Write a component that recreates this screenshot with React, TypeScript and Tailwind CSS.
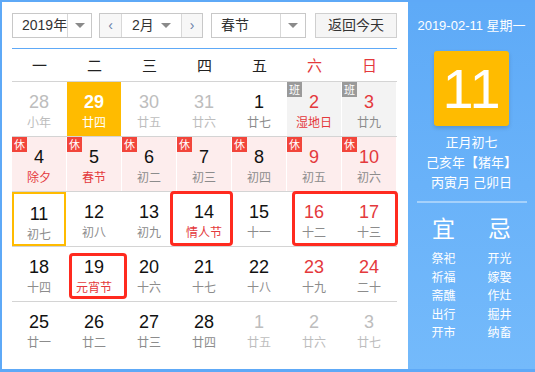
import { ReactNode } from "react";

type Day = {
  n: number;
  lunar: string;
  kind?: "other" | "red" | "hover";
  lunarRed?: boolean;
  badge?: "休" | "班";
  bg?: "pink" | "gray";
  today?: boolean;
};

const rows: Day[][] = [
  [
    { n: 28, lunar: "小年", kind: "other" },
    { n: 29, lunar: "廿四", kind: "hover" },
    { n: 30, lunar: "廿五", kind: "other" },
    { n: 31, lunar: "廿六", kind: "other" },
    { n: 1, lunar: "廿七" },
    { n: 2, lunar: "湿地日", kind: "red", lunarRed: true, badge: "班", bg: "gray" },
    { n: 3, lunar: "廿九", kind: "red", badge: "班", bg: "gray" },
  ],
  [
    { n: 4, lunar: "除夕", lunarRed: true, badge: "休", bg: "pink" },
    { n: 5, lunar: "春节", lunarRed: true, badge: "休", bg: "pink" },
    { n: 6, lunar: "初二", badge: "休", bg: "pink" },
    { n: 7, lunar: "初三", badge: "休", bg: "pink" },
    { n: 8, lunar: "初四", badge: "休", bg: "pink" },
    { n: 9, lunar: "初五", kind: "red", badge: "休", bg: "pink" },
    { n: 10, lunar: "初六", kind: "red", badge: "休", bg: "pink" },
  ],
  [
    { n: 11, lunar: "初七", today: true },
    { n: 12, lunar: "初八" },
    { n: 13, lunar: "初九" },
    { n: 14, lunar: "情人节", lunarRed: true },
    { n: 15, lunar: "十一" },
    { n: 16, lunar: "十二", kind: "red" },
    { n: 17, lunar: "十三", kind: "red" },
  ],
  [
    { n: 18, lunar: "十四" },
    { n: 19, lunar: "元宵节", lunarRed: true },
    { n: 20, lunar: "十六" },
    { n: 21, lunar: "十七" },
    { n: 22, lunar: "十八" },
    { n: 23, lunar: "十九", kind: "red" },
    { n: 24, lunar: "二十", kind: "red" },
  ],
  [
    { n: 25, lunar: "廿一" },
    { n: 26, lunar: "廿二" },
    { n: 27, lunar: "廿三" },
    { n: 28, lunar: "廿四" },
    { n: 1, lunar: "廿五", kind: "other" },
    { n: 2, lunar: "廿六", kind: "other" },
    { n: 3, lunar: "廿七", kind: "other" },
  ],
];

const weekdays = ["一", "二", "三", "四", "五", "六", "日"];

const Caret = () => (
  <span className="w-0 h-0 border-l-[5px] border-r-[5px] border-t-[5px] border-l-transparent border-r-transparent border-t-[#8a8a8a]" />
);

const Select = ({ label, width, children }: { label: string; width: string; children?: ReactNode }) => (
  <div className={`flex h-[25px] border border-[#c8c8c8] bg-white ${width}`}>
    <div className="flex-1 flex items-center pl-[9px] text-[14px] text-[#333] whitespace-nowrap">{label}</div>
    {children}
    <div className="w-[25px] shrink-0 border-l border-[#d8d8d8] flex items-center justify-center">
      <Caret />
    </div>
  </div>
);

const Cell = ({ d }: { d: Day }) => {
  const numColor =
    d.kind === "other"
      ? "text-[#bdbdbd]"
      : d.kind === "red"
      ? "text-[#e4393c]"
      : d.kind === "hover"
      ? "text-white font-bold"
      : "text-[#111]";
  const lunarColor =
    d.kind === "other"
      ? "text-[#bdbdbd]"
      : d.kind === "hover"
      ? "text-white"
      : d.lunarRed
      ? "text-[#e4393c]"
      : "text-[#8c8c8c]";
  const bg =
    d.kind === "hover"
      ? "bg-[#ffbb00]"
      : d.bg === "pink"
      ? "bg-[#fdeded]"
      : d.bg === "gray"
      ? "bg-[#f3f3f3]"
      : "bg-white";
  return (
    <div
      className={`relative h-[54px] flex flex-col items-center pt-[9px] mr-px ${bg} ${
        d.today ? "border-2 border-[#ffbb00] pt-[7px]" : ""
      }`}
    >
      {d.badge && (
        <span
          className={`absolute left-0 top-0 w-[15px] h-[15px] flex items-center justify-center text-[11px] leading-none text-white ${
            d.badge === "休" ? "bg-[#f2453b]" : "bg-[#9a9a9a]"
          }`}
        >
          {d.badge}
        </span>
      )}
      <span className={`text-[18px] leading-[22px] font-['Liberation_Sans',Arial,sans-serif] ${numColor}`}>{d.n}</span>
      <span className={`text-[12px] leading-[18px] ${lunarColor}`}>{d.lunar}</span>
    </div>
  );
};

const yi = ["祭祀", "祈福", "斋醮", "出行", "开市"];
const ji = ["开光", "嫁娶", "作灶", "掘井", "纳畜"];

export default function App() {
  return (
    <div className="w-[535px] h-[372px] flex border-t-2 border-l-2 border-b-[3px] border-[#5ea9f7] bg-white font-['Noto_Sans_CJK_SC','Liberation_Sans',sans-serif]">
      {/* calendar side */}
      <div className="w-[406px] pl-[10px] pr-[11px] pt-[11px]">
        <div className="flex items-center h-[25px] font-['Liberation_Sans','Noto_Sans_CJK_SC',sans-serif]">
          <Select label="2019年" width="w-[80px]" />
          <div className="ml-[7px] flex h-[25px] w-[104px] border border-[#c8c8c8] bg-white text-[14px] text-[#333]">
            <div className="w-[22px] bg-[#f7f7f7] border-r border-[#d8d8d8] flex items-center justify-center text-[#6a7fa8]">‹</div>
            <div className="flex-1 flex items-center pl-[10px]">2月</div>
            <div className="w-[20px] flex items-center justify-start">
              <Caret />
            </div>
            <div className="w-[21px] bg-[#f7f7f7] border-l border-[#d8d8d8] flex items-center justify-center text-[#6a7fa8]">›</div>
          </div>
          <div className="ml-[8px]">
            <Select label="春节" width="w-[95px]" />
          </div>
          <div className="ml-[9px] w-[82px] h-[25px] border border-[#cfcfcf] bg-[#f5f5f5] flex items-center justify-center text-[14px] text-[#333]">
            返回今天
          </div>
        </div>
        <div className="mt-[10px] h-px bg-[#5ea9f7]" />

        <div className="grid grid-cols-7 h-[33px] items-center border-b border-[#d4d4d4] text-[15px]">
          {weekdays.map((w, i) => (
            <div key={w} className={`text-center ${i >= 5 ? "text-[#e4393c]" : "text-[#222]"}`}>
              {w}
            </div>
          ))}
        </div>

        <div className="relative">
          {rows.map((r, i) => (
            <div key={i} className={`grid grid-cols-7 ${i < 4 ? "border-b border-[#d4d4d4]" : ""}`}>
              {r.map((d, j) => (
                <Cell key={j} d={d} />
              ))}
            </div>
          ))}
          {/* red annotation boxes */}
          <div className="absolute left-[158px] top-[109px] w-[63px] h-[55px] border-[3px] border-[#ff2a1f] rounded-[4px]" />
          <div className="absolute left-[280px] top-[109px] w-[106px] h-[55px] border-[3px] border-[#ff2a1f] rounded-[4px]" />
          <div className="absolute left-[57px] top-[171px] w-[58px] h-[46px] border-[3px] border-[#ff2a1f] rounded-[4px]" />
        </div>
      </div>

      {/* info side */}
      <div className="flex-1 bg-gradient-to-b from-[#5eaaf7] to-[#74bafb] text-white flex flex-col items-center">
        <div className="mt-[15px] text-[13px] leading-[18px] font-['Liberation_Sans','Noto_Sans_CJK_SC',sans-serif]">2019-02-11 星期一</div>
        <div className="mt-[16px] w-[75px] h-[75px] rounded-[3px] bg-[#ffbb00] shadow-[0_2px_4px_rgba(0,0,0,0.15)] flex items-center justify-center text-[56px] leading-none font-['Liberation_Sans',sans-serif]">
          11
        </div>
        <div className="mt-[6px] text-[13px] leading-[20px] text-center">
          <div>正月初七</div>
          <div>己亥年【猪年】</div>
          <div>丙寅月 己卯日</div>
        </div>
        <div className="mt-[9px] w-[110px] h-[2px] bg-white/40" />
        <div className="mt-[8px] grid grid-cols-2 w-[112px] text-center">
          <div className="text-[23px] leading-[32px]">宜</div>
          <div className="text-[23px] leading-[32px]">忌</div>
          <div className="mt-[6px] text-[12px] leading-[18.5px]">
            {yi.map((t) => (
              <div key={t}>{t}</div>
            ))}
          </div>
          <div className="mt-[6px] text-[12px] leading-[18.5px]">
            {ji.map((t) => (
              <div key={t}>{t}</div>
            ))}
          </div>
        </div>
      </div>
    </div>
  );
}
